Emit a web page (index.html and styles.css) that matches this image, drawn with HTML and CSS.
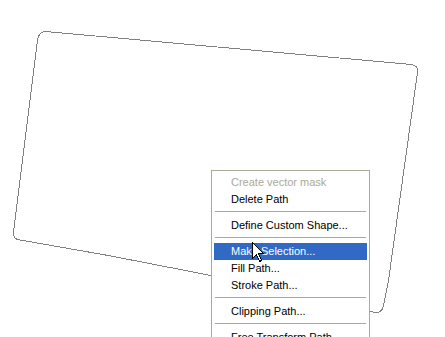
FILE: index.html
```html
<!DOCTYPE html>
<html lang="en">
<head>
    <meta charset="UTF-8">
    <title>Path menu</title>
    <link rel="stylesheet" href="styles.css">
</head>
<body>
    <div class="canvas">
        <!-- the work path drawn on the document -->
        <svg class="path" width="445" height="337" viewBox="0 0 445 337">
            <path d="M45.5,31.5 L411.5,64.5 Q418.5,65.5 417.5,72.5 Q403,175 388.5,280.5 L383.5,305.5 Q382.5,312.5 375.5,312.5 Q200,270 17.5,239.5 Q13.5,238.5 13.5,232.5 L37.5,40.5 Q38.5,31.5 45.5,31.5 Z"/>
        </svg>

        <!-- context menu -->
        <ul class="menu">
            <li class="item disabled">Create vector mask</li>
            <li class="item">Delete Path</li>
            <li class="sep"></li>
            <li class="item">Define Custom Shape...</li>
            <li class="sep"></li>
            <li class="item active">Make Selection...</li>
            <li class="item">Fill Path...</li>
            <li class="item">Stroke Path...</li>
            <li class="sep"></li>
            <li class="item">Clipping Path...</li>
            <li class="sep"></li>
            <li class="item">Free Transform Path</li>
        </ul>

        <!-- mouse pointer -->
        <svg class="cursor" width="13" height="21" viewBox="0 0 13 21">
            <path d="M0.5,0.5 L0.5,16.5 L4.5,12.5 L7.5,19.5 L9.5,18.5 L6.5,11.5 L11.5,11.5 Z"/>
        </svg>
    </div>
</body>
</html>
```

FILE: styles.css
```css
body {
    margin: 0;
    background: #ffffff;
    overflow: hidden;
}

.canvas {
    position: relative;
    width: 445px;
    height: 337px;
    overflow: hidden;
}

.path {
    position: absolute;
    left: 0;
    top: 0;
}

.path path {
    fill: none;
    stroke: #808080;
    stroke-width: 1;
    shape-rendering: crispEdges;
}

.menu {
    position: absolute;
    left: 211px;
    top: 170px;
    width: 153px;
    margin: 0;
    padding: 3px 2px;
    list-style: none;
    background: #ffffff;
    border: 1px solid #aca899;
    font-family: "Liberation Sans", Arial, sans-serif;
    font-size: 11px;
    color: #000000;
}

.item {
    height: 17px;
    line-height: 17px;
    padding-left: 17px;
    white-space: nowrap;
}

.disabled {
    color: #aca899;
}

.active {
    background: #316ac5;
    color: #ffffff;
}

.sep {
    height: 1px;
    margin: 3px 1px 5px 1px;
    background: #aca899;
}

.cursor {
    position: absolute;
    left: 252px;
    top: 242px;
}

.cursor path {
    fill: #ffffff;
    stroke: #000000;
    stroke-width: 1;
    shape-rendering: crispEdges;
}
```
